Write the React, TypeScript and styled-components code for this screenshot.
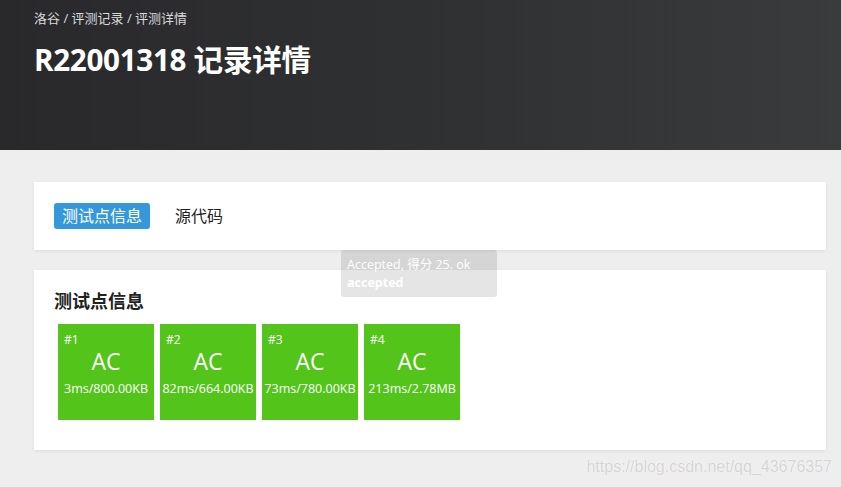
import React from "react";
import styled, { createGlobalStyle } from "styled-components";

const GlobalStyle = createGlobalStyle`
  html, body {
    margin: 0;
    padding: 0;
    background: #eeeeee;
    font-family: "Open Sans", "Noto Sans CJK SC", sans-serif;
    color: #333;
  }
  * {
    box-sizing: border-box;
  }
`;

const Page = styled.div`
  position: relative;
  min-height: 487px;
  overflow: hidden;
`;

const Header = styled.header`
  height: 150px;
  background: linear-gradient(90deg, #29292c 0%, #303133 55%, #3a3b3c 100%);
  padding: 8px 34px 0;
  color: #fff;
`;

const Crumbs = styled.div`
  font-size: 13px;
  line-height: 20px;
  color: #d9dadc;
`;

const Title = styled.h1`
  margin: 13px 0 0;
  font-size: 29.6px;
  line-height: 38px;
  font-weight: 700;
  letter-spacing: -0.3px;
`;

const Main = styled.main`
  padding: 32px 15px 20px 34px;
  display: flex;
  flex-direction: column;
  gap: 20px;
`;

const Card = styled.section<{ $pad?: string }>`
  background: #fff;
  box-shadow: 0 1px 3px rgba(0, 0, 0, 0.08);
  padding: ${(p) => p.$pad || "20px"};
`;

const Tabs = styled.div`
  display: flex;
  align-items: center;
  gap: 17px;
`;

const Tab = styled.button<{ $active?: boolean }>`
  border: none;
  font-family: inherit;
  font-size: 16px;
  line-height: 26px;
  height: 26px;
  padding: 0 8px;
  border-radius: 3px;
  background: ${(p) => (p.$active ? "#3498db" : "transparent")};
  color: ${(p) => (p.$active ? "#fff" : "#222")};
  cursor: pointer;
`;

const CardTitle = styled.h3`
  margin: 0 0 10px;
  font-size: 18px;
  line-height: 26px;
  font-weight: 700;
  color: #222;
`;

const Cases = styled.div`
  display: flex;
  gap: 6px;
  padding-left: 4px;
`;

const CaseBox = styled.div`
  width: 96px;
  height: 96px;
  background: #52c41a;
  color: #fff;
  padding: 8px 6px 0;
  display: flex;
  flex-direction: column;
`;

const CaseId = styled.div`
  font-size: 12px;
  line-height: 16px;
`;

const CaseStatus = styled.div`
  font-size: 23px;
  line-height: 28px;
  text-align: center;
  margin-top: -1px;
`;

const CaseInfo = styled.div`
  font-size: 12.5px;
  line-height: 16px;
  text-align: center;
  margin: 6px -6px 0;
  white-space: nowrap;
`;

const Tooltip = styled.div`
  position: absolute;
  left: 341px;
  top: 250px;
  width: 156px;
  height: 47px;
  padding: 6px 6px;
  border-radius: 3px;
  background: rgba(0, 0, 0, 0.1);
  color: #fff;
  font-size: 12.5px;
  line-height: 18px;
`;

const Bold = styled.div`
  font-weight: 700;
`;

const Watermark = styled.div`
  position: absolute;
  right: 9px;
  bottom: 11px;
  font-family: "Liberation Sans", Arial, sans-serif;
  font-size: 16px;
  color: #d4d4d4;
  text-shadow: 0 0 1px #fff, 0 0 1px #fff;
`;

const cases = [
  { id: 1, info: "3ms/800.00KB" },
  { id: 2, info: "82ms/664.00KB" },
  { id: 3, info: "73ms/780.00KB" },
  { id: 4, info: "213ms/2.78MB" },
];

function App() {
  return (
    <Page>
      <GlobalStyle />
      <Header>
        <Crumbs>洛谷 / 评测记录 / 评测详情</Crumbs>
        <Title>R22001318 记录详情</Title>
      </Header>
      <Main>
        <Card $pad="21px 20px">
          <Tabs>
            <Tab $active>测试点信息</Tab>
            <Tab>源代码</Tab>
          </Tabs>
        </Card>
        <Card $pad="18px 20px 30px">
          <CardTitle>测试点信息</CardTitle>
          <Cases>
            {cases.map((c) => (
              <CaseBox key={c.id}>
                <CaseId>#{c.id}</CaseId>
                <CaseStatus>AC</CaseStatus>
                <CaseInfo>{c.info}</CaseInfo>
              </CaseBox>
            ))}
          </Cases>
        </Card>
      </Main>
      <Tooltip>
        <div>Accepted, 得分 25. ok</div>
        <Bold>accepted</Bold>
      </Tooltip>
      <Watermark>https://blog.csdn.net/qq_43676357</Watermark>
    </Page>
  );
}

export default App;
